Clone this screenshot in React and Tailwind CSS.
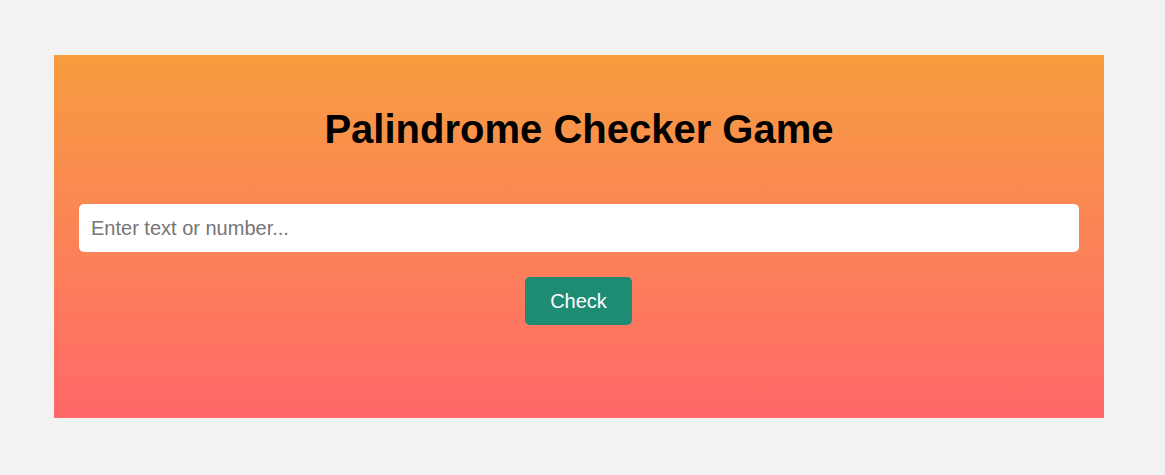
export default function App() {
  return (
    <div className="min-h-[475px] bg-[#f2f2f2] pt-[55px] pl-[54px] font-['Liberation_Sans',Arial,sans-serif]">
      <div className="flex w-[1050px] h-[363px] flex-col items-center bg-gradient-to-b from-[#f69c3d] to-[#ff6768] px-[25px] pt-[51px]">
        <h1 className="text-[40px] leading-[46px] font-bold text-black">Palindrome Checker Game</h1>
        <input
          type="text"
          placeholder="Enter text or number..."
          className="mt-[52px] h-[48px] w-full rounded-[5px] bg-white px-[12px] text-[20px] text-black outline-none placeholder:text-[#757575]"
        />
        <button className="mt-[25px] -ml-[1px] h-[48px] w-[107px] rounded-[5px] bg-[#1d8c73] text-[20px] text-white">
          Check
        </button>
      </div>
    </div>
  );
}
